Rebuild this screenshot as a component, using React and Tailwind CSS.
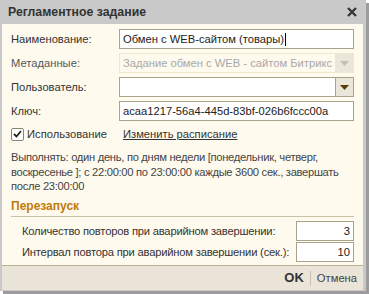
import React from 'react'

const font = { fontFamily: '"Liberation Sans", Arial, sans-serif' }

function Row({ label, children, muted }) {
    return (
        <div className="flex items-center h-[20px]">
            <div className={`w-[108px] shrink-0 ${muted ? 'text-[#555]' : 'text-[#333]'}`}>{label}</div>
            {children}
        </div>
    )
}

function Arrow({ color }) {
    return (
        <svg width="9" height="5" viewBox="0 0 9 5">
            <polygon points="0,0 9,0 4.5,5" fill={color} />
        </svg>
    )
}

export default function App() {
    return (
        <div className="w-[369px] h-[294px] bg-white text-[11.2px] leading-[14px]" style={font}>
            <div className="w-[366px] h-[291px] bg-[#c9c9c9] shadow-[3px_3px_0_#9c9c9c] flex flex-col pl-[2px] pr-[3px] pb-[1px]">
                {/* заголовок окна */}
                <div className="h-[24px] shrink-0 flex items-center justify-between pl-[6px] pr-[6px]">
                    <span className="font-bold text-[12.3px] text-[#333]">Регламентное задание</span>
                    <svg width="10" height="10" viewBox="0 0 10 10">
                        <path d="M1 1 L9 9 M9 1 L1 9" stroke="#333" strokeWidth="2.2" />
                    </svg>
                </div>

                <div className="flex-1 bg-[#fffaee] flex flex-col">
                    <div className="flex-1 px-[9px] pt-[5px] flex flex-col">
                        <Row label="Наименование:">
                            <div className="flex-1 h-[20px] border border-[#a9a38d] bg-white flex items-center px-[3px] text-[#222]">
                                Обмен с WEB-сайтом (товары)<span className="w-px h-[13px] bg-black ml-px" />
                            </div>
                        </Row>
                        <div className="h-[4px]" />
                        <Row label="Метаданные:" muted>
                            <div className="flex-1 h-[20px] flex border border-[#f0e9cf]">
                                <div className="flex-1 flex items-center px-[3px] text-[#a8a8a8] whitespace-nowrap">Задание обмен с WEB - сайтом Битрикс</div>
                                <div className="w-[18px] bg-[#ebe6da] flex items-center justify-center"><Arrow color="#c4bfb2" /></div>
                            </div>
                        </Row>
                        <div className="h-[4px]" />
                        <Row label="Пользователь:">
                            <div className="flex-1 h-[20px] flex border border-[#a9a38d] bg-white">
                                <div className="flex-1" />
                                <div className="w-[18px] bg-[#ebe6da] border-l border-[#a9a38d] flex items-center justify-center"><Arrow color="#5a3c0a" /></div>
                            </div>
                        </Row>
                        <div className="h-[4px]" />
                        <Row label="Ключ:">
                            <div className="flex-1 h-[20px] border border-[#a9a38d] bg-white flex items-center px-[3px] text-[#222]">
                                acaa1217-56a4-445d-83bf-026b6fccc00a
                            </div>
                        </Row>

                        <div className="flex items-center h-[20px] mt-[3px]">
                            <div className="w-[108px] shrink-0 flex items-center">
                                <div className="w-[13px] h-[13px] border border-[#8a8574] rounded-[2px] bg-white flex items-center justify-center">
                                    <svg width="9" height="8" viewBox="0 0 9 8">
                                        <path d="M1 4 L3.5 6.5 L8 1" stroke="#222" strokeWidth="1.8" fill="none" />
                                    </svg>
                                </div>
                                <span className="ml-[3px] text-[#333]">Использование</span>
                            </div>
                            <span className="ml-[4px] underline text-[#333]">Изменить расписание</span>
                        </div>

                        <p className="mt-[6px] text-[#444] leading-[14.5px] tracking-[-0.3px]">
                            Выполнять: один день, по дням недели [понедельник, четверг, воскресенье ]; с 22:00:00 по 23:00:00 каждые 3600 сек., завершать после 23:00:00
                        </p>

                        <div className="mt-[5px] pb-[3px] border-b border-[#c9c2a8] font-bold text-[12px] text-[#c07b0c]">Перезапуск</div>

                        <div className="pl-[11px] mt-[4px] flex flex-col gap-[1px]">
                            <div className="flex items-center h-[20px]">
                                <span className="flex-1 text-[#333] whitespace-nowrap tracking-[-0.2px]">Количество повторов при аварийном завершении:</span>
                                <div className="w-[58px] h-[20px] border border-[#a9a38d] bg-white flex items-center justify-end px-[3px] text-[#222]">3</div>
                            </div>
                            <div className="flex items-center h-[20px]">
                                <span className="flex-1 text-[#333] whitespace-nowrap tracking-[-0.2px]">Интервал повтора при аварийном завершении (сек.):</span>
                                <div className="w-[58px] h-[20px] border border-[#a9a38d] bg-white flex items-center justify-end px-[3px] text-[#222]">10</div>
                            </div>
                        </div>
                    </div>

                    <div className="h-[25px] shrink-0 bg-[#ebe5d9] border-t border-[#b9b196] flex items-center justify-end pr-[6px]">
                        <span className="font-bold text-[13px] text-[#333]">OK</span>
                        <span className="w-px h-[15px] bg-[#c9c2ae] mx-[6px]" />
                        <span className="text-[#444]">Отмена</span>
                    </div>
                </div>
            </div>
        </div>
    )
}
